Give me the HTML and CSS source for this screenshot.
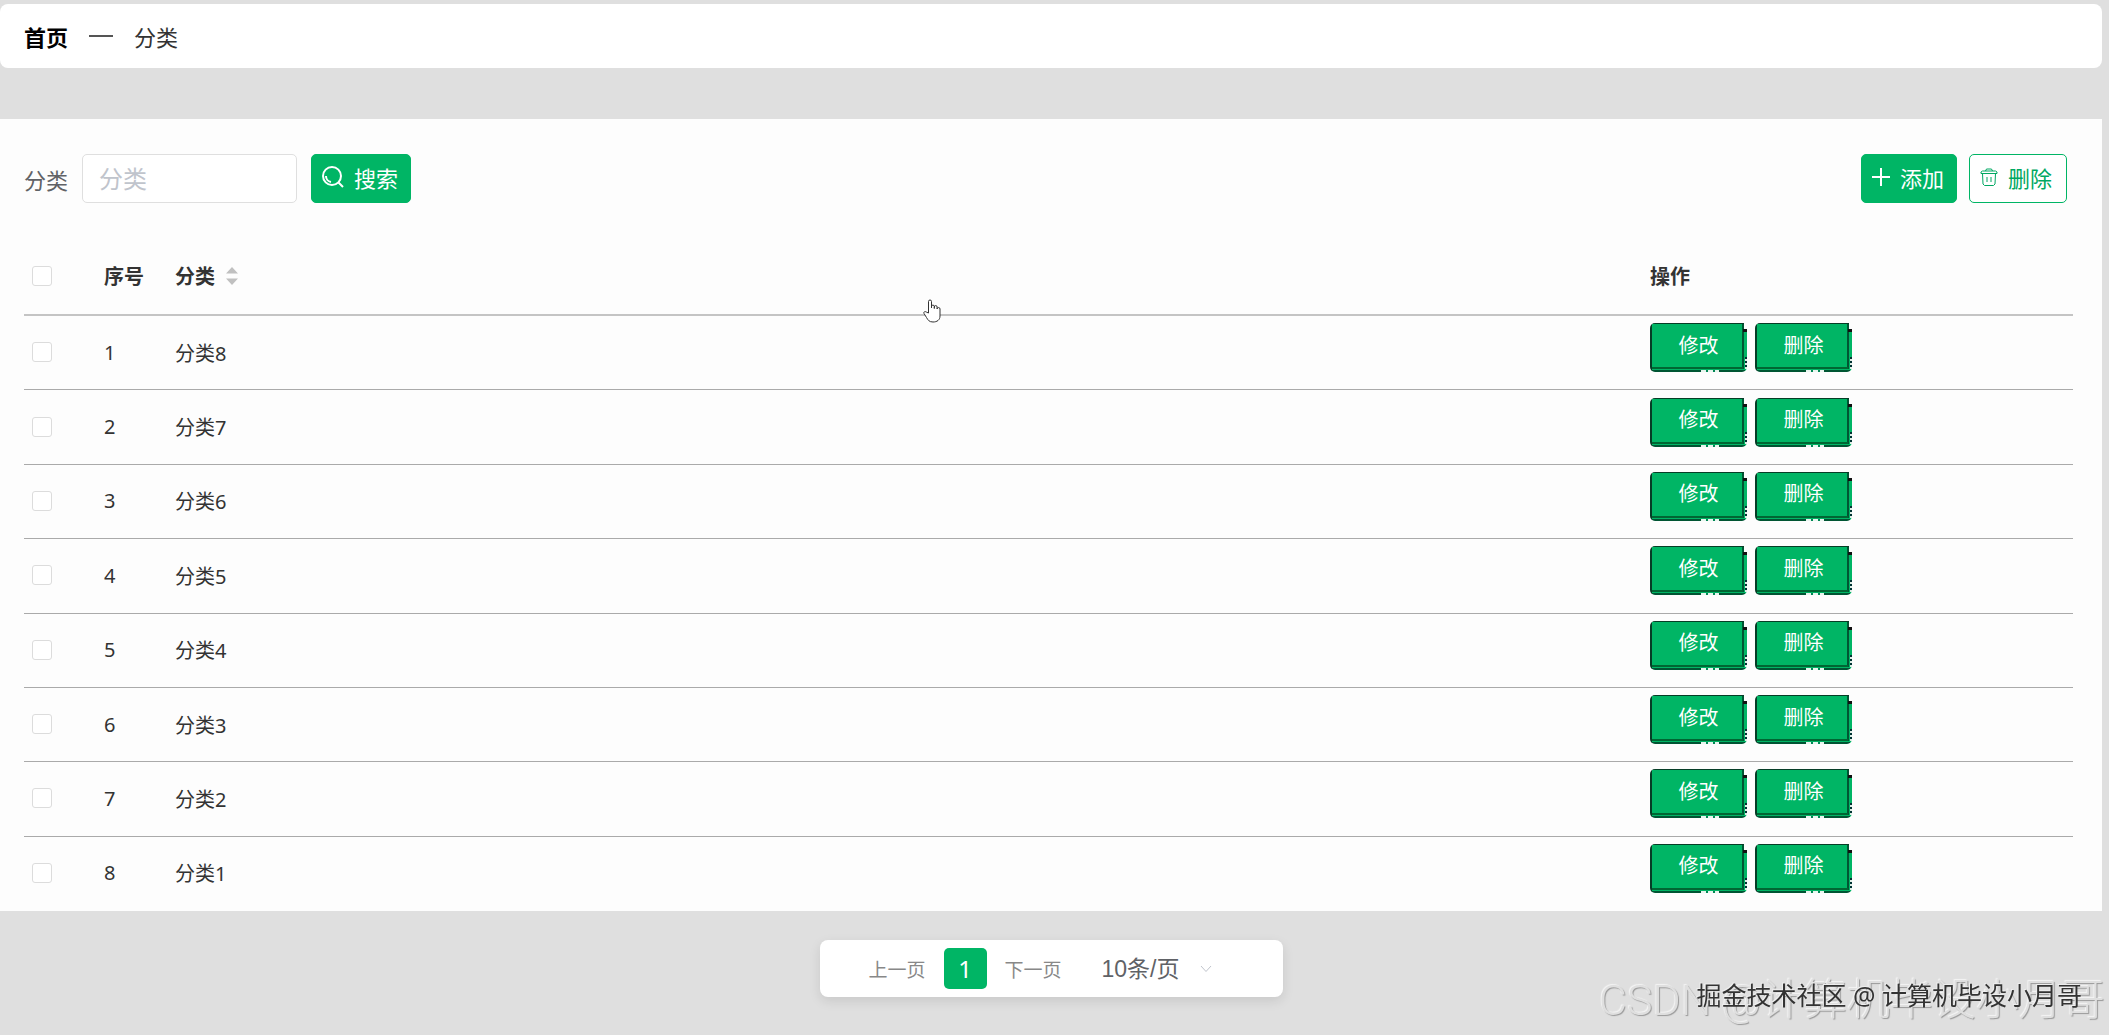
FILE: index.html
```
<!DOCTYPE html>
<html lang="zh-CN">
<head>
  <meta charset="UTF-8">
  <meta name="viewport" content="width=device-width, initial-scale=1.0">
  <title>分类</title>
  <link rel="stylesheet" href="styles.css">
</head>
<body>
  <nav class="breadcrumb">
    <a class="breadcrumb-home" href="#">首页</a>
    <span class="breadcrumb-separator"></span>
    <span class="breadcrumb-current">分类</span>
  </nav>

  <main class="panel">
    <div class="toolbar">
      <form class="search-form">
        <label class="search-label" for="category">分类</label>
        <input class="search-input" id="category" type="text" placeholder="分类">
        <button class="button" type="button">
          <svg class="icon icon-large" viewBox="0 0 22 22"><circle cx="10" cy="10" r="9"/><path d="M16.5 16.5L21 21M4 10a6 6 0 0 0 5 6"/></svg>
          搜索
        </button>
      </form>
      <div class="toolbar-actions">
        <button class="button" type="button">
          <svg class="icon" viewBox="0 0 18 18"><path d="M9 0v18M0 9h18"/></svg>
          添加
        </button>
        <button class="button button-plain" type="button">
          <svg class="icon icon-thin" viewBox="0 0 18 18"><path d="M1 5.500h16M1 5.500V4l1.500-1h13L17 4v1.500M5.500 3l1-2h5l1 2M2.500 5.500l.5 10.500 1.500 1.500h9L15 16l.5-10.500M7 9v5M11 9v5"/></svg>
          删除
        </button>
      </div>
    </div>

    <table class="data-table">
      <thead>
        <tr>
          <th class="col-check"><input class="checkbox" type="checkbox" aria-label="全选"></th>
          <th class="col-index">序号</th>
          <th>
            <button class="sort-button" type="button">
              分类
              <svg class="sort-icon" viewBox="0 0 12 18"><path d="M6 0l6 6.500H0zM6 18l6-6.500H0z"/></svg>
            </button>
          </th>
          <th class="col-actions">操作</th>
        </tr>
      </thead>
      <tbody id="rows"></tbody>
    </table>
  </main>

  <div class="pagination">
    <button class="page-link" type="button">上一页</button>
    <button class="page-number" type="button">1</button>
    <button class="page-link" type="button">下一页</button>
    <div class="page-size">
      <select class="page-size-select" aria-label="每页条数">
        <option>10条/页</option>
      </select>
      <svg class="page-size-arrow" viewBox="0 0 12 8"><path d="M1 1l5 5.500L11 1"/></svg>
    </div>
  </div>

  <div class="watermark watermark-light">CSDN @计算机毕设小月哥</div>
  <div class="watermark watermark-dark">掘金技术社区 @ 计算机毕设小月哥</div>

  <svg class="pointer" viewBox="0 0 18 24"><path d="M5.500 14V2.500a1.500 1.500 0 0 1 3 0V9V7.500a1.400 1.400 0 0 1 2.800 0V9.500V8a1.400 1.400 0 0 1 2.800 0V10a1.400 1.400 0 0 1 2.900 0v7c0 4-3 6-7 6s-5-2-6.500-4.500L1 14.500c-.8-1.500 1-2.500 2.200-1.500z"/></svg>

  <script>
    const rows = document.getElementById('rows');

    for (let i = 1; i <= 8; i++) {
      const name = `分类${9 - i}`;
      rows.insertAdjacentHTML('beforeend', `
        <tr>
          <td class="col-check"><input class="checkbox" type="checkbox" aria-label="${name}"></td>
          <td>${i}</td>
          <td>${name}</td>
          <td>
            <div class="row-actions">
              <button class="row-button" type="button">修改</button>
              <button class="row-button" type="button">删除</button>
            </div>
          </td>
        </tr>`);
    }
  </script>
</body>
</html>
```
FILE: styles.css
```
* {
  margin: 0;
  padding: 0;
  box-sizing: border-box;
}

body {
  font-family: 'Noto Sans', 'Noto Sans CJK SC', sans-serif;
  font-size: 20px;
  color: #333;
  background: #dfdfdf;
  min-height: 100vh;
  padding: 4px 7px 0 0;
}

button,
input,
select {
  font-family: inherit;
}

.breadcrumb {
  display: flex;
  align-items: center;
  gap: 21px;
  height: 64px;
  padding: 0 24px;
  background: #fff;
  border-radius: 8px;
  font-size: 22px;
}

.breadcrumb-home {
  color: #000;
  font-weight: 700;
  text-decoration: none;
}

.breadcrumb-separator {
  width: 24px;
  height: 2px;
  background: #555;
}

.panel {
  margin-top: 51px;
  padding: 35px 29px 0 24px;
  background: #fdfdfd;
}

.toolbar {
  display: flex;
  justify-content: space-between;
  padding-right: 6px;
}

.search-form {
  display: flex;
  align-items: center;
}

.search-label {
  margin-right: 14px;
  color: #606266;
  font-size: 22px;
}

.search-input {
  width: 215px;
  height: 49px;
  margin-right: 14px;
  padding: 0 16px;
  background: #fff;
  border: 1px solid #dfdfdf;
  border-radius: 5px;
  font-size: 24px;
}

.search-input::placeholder {
  color: #c0c4cc;
}

.toolbar-actions {
  display: flex;
  gap: 12px;
}

.button {
  display: flex;
  align-items: center;
  gap: 10px;
  height: 49px;
  padding: 0 12px 3px 10px;
  background: #00b565;
  border: 1px solid #00b565;
  border-radius: 5px;
  color: #fff;
  font-size: 22px;
  cursor: pointer;
}

.button-plain {
  padding-right: 14px;
  background: #fff;
  color: #00a862;
}

.icon {
  width: 18px;
  height: 18px;
  fill: none;
  stroke: currentColor;
  stroke-width: 2;
}

.icon-large {
  width: 22px;
  height: 22px;
}

.icon-thin {
  stroke-width: 1;
}

.data-table {
  width: 100%;
  height: 674px;
  margin-top: 34px;
  border-collapse: separate;
  border-spacing: 0;
  table-layout: fixed;
}

.data-table th {
  height: 79px;
  border-bottom: 2px solid #c4c4c4;
  text-align: left;
  font-weight: 700;
}

.data-table td {
  height: 74px;
  padding-bottom: 1px;
  border-bottom: 1px solid #aaa;
}

.data-table tr:last-child td {
  border-bottom-color: transparent;
}

.data-table .col-check {
  width: 80px;
  padding-left: 8px;
}

.col-index {
  width: 71px;
}

.col-actions {
  width: 423px;
}

.checkbox {
  display: block;
  width: 20px;
  height: 20px;
  appearance: none;
  background: #fff;
  border: 1px solid #dcdcdc;
  border-radius: 3px;
}

.sort-button {
  display: flex;
  align-items: center;
  gap: 11px;
  background: none;
  border: none;
  color: inherit;
  font-size: 20px;
  font-weight: 700;
}

.sort-icon {
  width: 12px;
  height: 18px;
  fill: #c0c0c0;
}

.row-actions {
  display: flex;
  gap: 8px;
  padding-bottom: 9px;
}

/* raised face with a darker edge on the right and bottom */
.row-button {
  width: 97px;
  height: 49px;
  padding-bottom: 7px;
  background:
    linear-gradient(#fdfdfd, #fdfdfd) right top / 3px 6px no-repeat,
    linear-gradient(#111, #111) right 6px / 4px 3px no-repeat,
    repeating-linear-gradient(#033 0 2px, #dfeee6 2px 4px) right bottom 3px / 2px 12px no-repeat,
    repeating-linear-gradient(90deg, #e8f5ee 0 5px, #085 5px 7px) 51px bottom / 18px 2px no-repeat,
    linear-gradient(#063d26, #063d26) left top / 94px 1px no-repeat,
    linear-gradient(#063d26, #063d26) left top / 2px 100% no-repeat,
    linear-gradient(#053, #053) left bottom / 95px 2px no-repeat,
    linear-gradient(#063, #063) 2px 44px / 91px 2px no-repeat,
    linear-gradient(#053, #053) 92px 1px / 2px 45px no-repeat,
    #00b565;
  border: none;
  border-radius: 5px 0 5px 5px;
  color: #fff;
  font-size: 20px;
  cursor: pointer;
}

.pagination {
  display: flex;
  align-items: center;
  width: 463px;
  height: 57px;
  margin: 29px auto 0;
  padding-left: 49px;
  background: #fff;
  border-radius: 8px;
  box-shadow: 0 4px 12px rgba(0, 0, 0, 0.1);
}

.page-link {
  background: none;
  border: none;
  color: #888;
  font-size: 19px;
}

.page-number {
  width: 43px;
  height: 41px;
  margin: 0 18px;
  background: #00b565;
  border: none;
  border-radius: 5px;
  color: #fff;
  font-size: 24px;
}

.page-size {
  display: flex;
  align-items: center;
  margin-left: 40px;
}

.page-size-select {
  appearance: none;
  background: none;
  border: none;
  color: #606266;
  font-family: 'Liberation Sans', 'Noto Sans CJK SC', sans-serif;
  font-size: 23px;
}

.page-size-arrow {
  width: 12px;
  height: 8px;
  margin-left: 20px;
  fill: none;
  stroke: #c0c4cc;
}

.watermark {
  position: fixed;
  white-space: nowrap;
  line-height: 1;
  pointer-events: none;
}

.watermark-light {
  right: 4px;
  bottom: 13px;
  color: #dfdfdf;
  font-family: Roboto, 'Noto Sans CJK SC', sans-serif;
  font-size: 43px;
  font-weight: 300;
  text-shadow: 1px 1px 1px #999, -1px -1px 1px #f4f4f4;
}

.watermark-dark {
  right: 27px;
  bottom: 27px;
  color: #333;
  font-size: 25px;
  text-shadow: -1px -1px 0 #eee;
}

.pointer {
  position: fixed;
  top: 299px;
  left: 923px;
  width: 18px;
  height: 24px;
  fill: #fff;
  stroke: #333;
}
```
